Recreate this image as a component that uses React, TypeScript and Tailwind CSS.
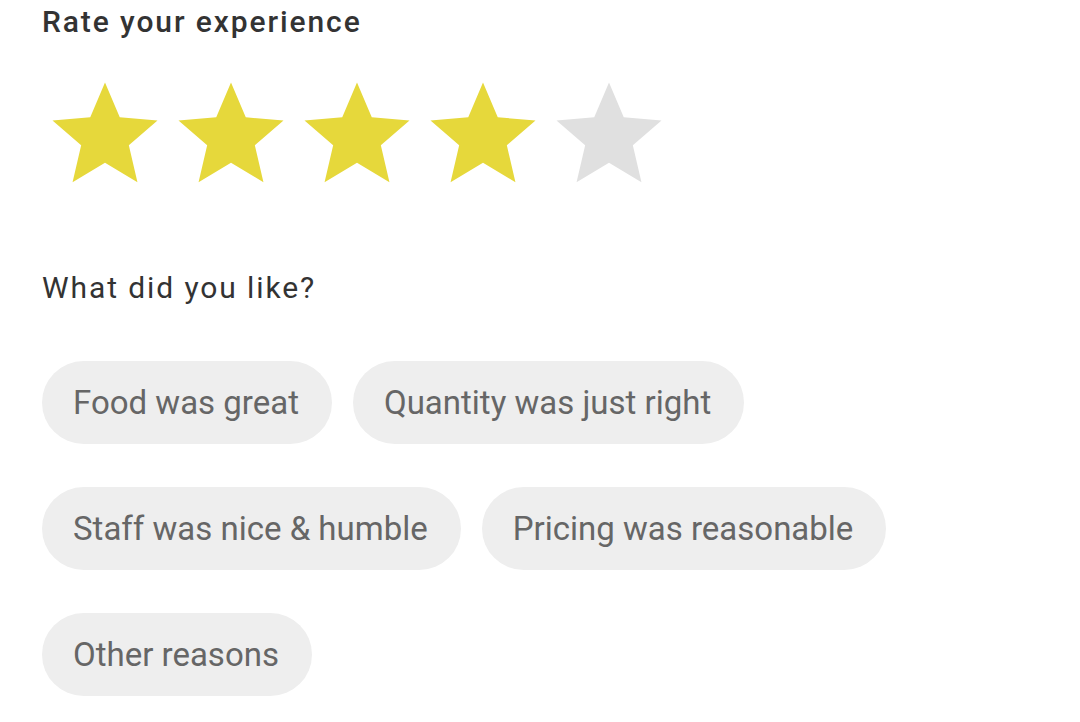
const STAR =
  "M12 17.27L18.18 21l-1.64-7.03L22 9.24l-7.19-.61L12 2 9.19 8.63 2 9.24l5.46 4.73L5.82 21z";

const reasons = [
  "Food was great",
  "Quantity was just right",
  "Staff was nice & humble",
  "Pricing was reasonable",
  "Other reasons",
];

function Star({ filled }: { filled: boolean }) {
  return (
    <svg viewBox="0 0 24 24" className="h-[126px] w-[126px] shrink-0">
      <path d={STAR} fill={filled ? "#e6d83b" : "#e0e0e0"} />
    </svg>
  );
}

export default function App() {
  const rating = 4;
  return (
    <main
      className="min-h-screen w-full bg-white px-[42px] pt-[7px]"
      style={{ fontFamily: "Roboto, 'Noto Sans', sans-serif" }}
    >
      <h1 className="text-[30px] font-medium leading-[30px] tracking-[1.9px] text-[#333333]">
        Rate your experience
      </h1>
      <div className="mt-[35px] flex">
        {[1, 2, 3, 4, 5].map((n) => (
          <Star key={n} filled={n <= rating} />
        ))}
      </div>
      <p className="mt-[76px] text-[30px] leading-[28px] tracking-[1.9px] text-[#333333]">
        What did you like?
      </p>
      <div className="mt-[59px] flex max-w-[1000px] flex-wrap gap-x-[21px] gap-y-[43px]">
        {reasons.map((r) => (
          <button
            key={r}
            className="flex h-[83px] items-center rounded-full bg-[#eeeeee] pl-[31px] pr-[33px] text-[33px] text-[#666666]"
          >
            {r}
          </button>
        ))}
      </div>
    </main>
  );
}
